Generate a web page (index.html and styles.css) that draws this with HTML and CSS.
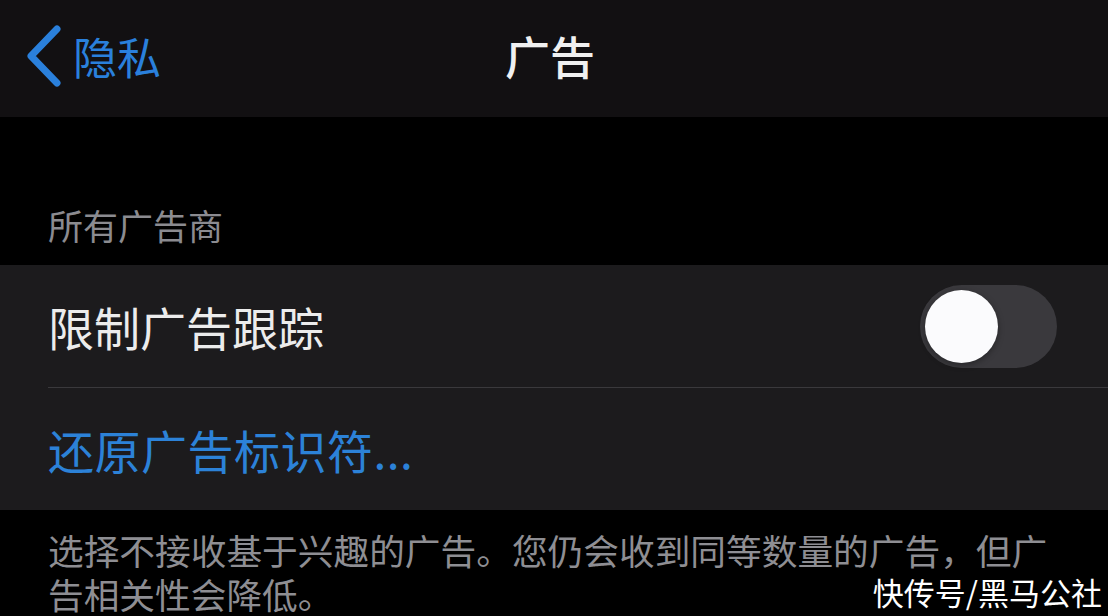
FILE: index.html
```html
<!DOCTYPE html>
<html lang="zh-CN">
<head>
  <meta charset="UTF-8">
  <title>广告</title>
  <meta name="viewport" content="width=device-width, initial-scale=1">
  <link rel="stylesheet" href="styles.css">
</head>
<body>

  <!-- 顶部导航栏 -->
  <header class="navbar">
    <a class="back" href="#">
      <svg class="chevron" width="40" height="62" viewBox="0 0 40 62">
        <polyline points="33,4 7,31 33,58" fill="none" stroke="#2a80dc" stroke-width="7" stroke-linecap="round" stroke-linejoin="round"/>
      </svg>
      <span>隐私</span>
    </a>
    <h1 class="title">广告</h1>
    <div></div>
  </header>

  <!-- 分组 -->
  <div class="section-title">所有广告商</div>
  <div class="group">
    <div class="row">
      <div class="row-inner with-line">
        <span class="label">限制广告跟踪</span>
        <div class="switch"><div class="knob"></div></div>
      </div>
    </div>
    <div class="row">
      <div class="row-inner">
        <span class="label link">还原广告标识符...</span>
      </div>
    </div>
  </div>

  <p class="footnote">选择不接收基于兴趣的广告。您仍会收到同等数量的广告，但广告相关性会降低。</p>

  <div class="watermark">快传号/黑马公社</div>

</body>
</html>
```

FILE: styles.css
```css
body {
  margin: 0;
  width: 1108px;
  height: 616px;
  overflow: hidden;
  position: relative;
  background: #000;
  font-family: "Noto Sans CJK SC", "Noto Sans", sans-serif;
  color: #f2f2f2;
}

/* 导航栏 */
.navbar {
  height: 117px;
  background: #121012;
  display: grid;
  grid-template-columns: 1fr auto 1fr;
  align-items: center;
}

.back {
  display: flex;
  align-items: center;
  gap: 9px;
  padding-left: 24px;
  color: #2a80dc;
  text-decoration: none;
  font-size: 44px;
  margin-top: -6px;
}

.title {
  margin: 0;
  font-size: 45px;
  font-weight: 500;
  color: #f0f0f0;
  margin-top: -6px;
  margin-left: -8px;
}

/* 分组标题 */
.section-title {
  padding: 84px 0 0 48px;
  height: 64px;
  font-size: 35px;
  line-height: 48px;
  color: #8b8b90;
}

.group {
  background: #1c1b1d;
}

.row {
  padding-left: 48px;
}

.row-inner {
  height: 122px;
  display: flex;
  align-items: center;
  justify-content: space-between;
  padding-right: 51px;
}

.with-line {
  border-bottom: 1px solid #3a393c;
}

.label {
  font-size: 46px;
  color: #ececec;
}

.link {
  color: #2c82d8;
  letter-spacing: 0.5px;
}

/* 开关 */
.switch {
  width: 137px;
  height: 83px;
  border-radius: 42px;
  background: #3a393d;
  display: flex;
  align-items: center;
  padding-left: 5px;
  box-sizing: border-box;
}

.knob {
  width: 73px;
  height: 73px;
  border-radius: 50%;
  background: #fbfbfd;
  box-shadow: 0 2px 6px rgba(0,0,0,0.35);
}

.footnote {
  margin: 0;
  padding: 18px 40px 0 48px;
  font-size: 35.7px;
  line-height: 44px;
  color: #8e8e93;
}

.watermark {
  position: absolute;
  right: 6px;
  bottom: 2px;
  font-size: 31px;
  color: #fff;
  text-shadow: 0 0 3px #000;
}
```
